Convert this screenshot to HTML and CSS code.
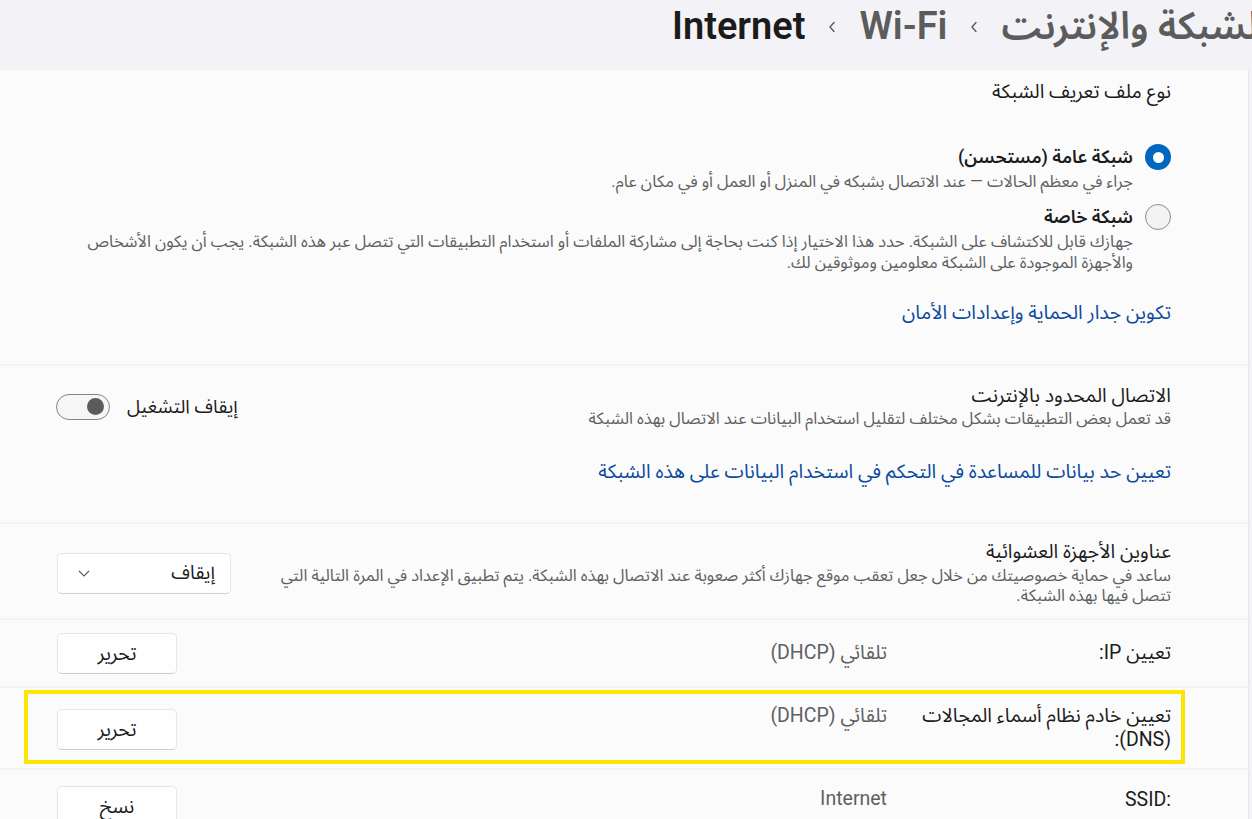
FILE: index.html
```html
<!DOCTYPE html>
<html lang="ar" dir="rtl">
<head>
<meta charset="utf-8">
<title>Wi-Fi - Internet</title>
<link rel="stylesheet" href="styles.css">
</head>
<body>
<header class="top">
  <nav class="crumbs">
    <span class="crumb crumb-muted">الشبكة والإنترنت</span>
    <svg class="chev" viewBox="0 0 8 12" aria-hidden="true"><polyline points="6,1.5 2,6 6,10.5"/></svg>
    <span class="crumb crumb-muted">Wi-Fi</span>
    <svg class="chev" viewBox="0 0 8 12" aria-hidden="true"><polyline points="6,1.5 2,6 6,10.5"/></svg>
    <span class="crumb crumb-current">Internet</span>
  </nav>
</header>

<main class="main">
  <section class="card profile">
    <div class="section-title">نوع ملف تعريف الشبكة</div>
    <div class="radio-list">
      <div class="radio-item">
        <span class="radio radio-on"></span>
        <div class="radio-text">
          <div class="radio-title">شبكة عامة (مستحسن)</div>
          <div class="desc">جراء في معظم الحالات — عند الاتصال بشبكه في المنزل أو العمل أو في مكان عام.</div>
        </div>
      </div>
      <div class="radio-item">
        <span class="radio"></span>
        <div class="radio-text">
          <div class="radio-title">شبكة خاصة</div>
          <div class="desc nowrap">جهازك قابل للاكتشاف على الشبكة. حدد هذا الاختيار إذا كنت بحاجة إلى مشاركة الملفات أو استخدام التطبيقات التي تتصل عبر هذه الشبكة. يجب أن يكون الأشخاص<br>والأجهزة الموجودة على الشبكة معلومين وموثوقين لك.</div>
        </div>
      </div>
    </div>
    <a class="link link-firewall" href="#">تكوين جدار الحماية وإعدادات الأمان</a>
  </section>

  <section class="card metered">
    <div class="setting-head">
      <div class="setting-text">
        <div class="setting-title">الاتصال المحدود بالإنترنت</div>
        <div class="desc">قد تعمل بعض التطبيقات بشكل مختلف لتقليل استخدام البيانات عند الاتصال بهذه الشبكة</div>
      </div>
      <div class="toggle-wrap">
        <span class="toggle-label">إيقاف التشغيل</span>
        <span class="toggle"><span class="knob"></span></span>
      </div>
    </div>
    <a class="link link-data" href="#">تعيين حد بيانات للمساعدة في التحكم في استخدام البيانات على هذه الشبكة</a>
  </section>

  <section class="card random">
    <div class="setting-head">
      <div class="setting-text">
        <div class="setting-title">عناوين الأجهزة العشوائية</div>
        <div class="desc desc-tight nowrap">ساعد في حماية خصوصيتك من خلال جعل تعقب موقع جهازك أكثر صعوبة عند الاتصال بهذه الشبكة. يتم تطبيق الإعداد في المرة التالية التي<br>تتصل فيها بهذه الشبكة.</div>
      </div>
      <div class="dropdown">
        <span class="dropdown-value">إيقاف</span>
        <svg class="dropdown-chev" viewBox="0 0 12 7" aria-hidden="true"><polyline points="1,1 6,6 11,1"/></svg>
      </div>
    </div>
  </section>

  <section class="card info-row info-row-ip">
    <div class="info-label">تعيين IP:</div>
    <div class="info-value">تلقائي (DHCP)</div>
    <button class="btn">تحرير</button>
  </section>

  <section class="card info-row info-row-dns">
    <div class="highlight">
      <div class="info-label">تعيين خادم نظام أسماء المجالات<br>(DNS):</div>
      <div class="info-value">تلقائي (DHCP)</div>
      <button class="btn">تحرير</button>
    </div>
  </section>

  <section class="card info-row info-row-ssid">
    <div class="info-label"><span dir="ltr">SSID:</span></div>
    <div class="info-value">Internet</div>
    <button class="btn">نسخ</button>
  </section>
</main>
</body>
</html>
```

FILE: styles.css
```css
* { box-sizing: border-box; }

html, body { margin: 0; padding: 0; }

body {
  width: 1252px;
  height: 819px;
  overflow: hidden;
  background: #f3f3f7;
  color: #1b1b1b;
  font-family: "Roboto", "Noto Sans Arabic", "Noto Sans", "DejaVu Sans", sans-serif;
  font-size: 19.5px;
}

/* ---------- header / breadcrumb ---------- */
.top {
  height: 70px;
  display: flex;
  justify-content: flex-end;
  align-items: flex-start;
  padding-left: 672px;
  overflow: hidden;
}

.crumbs {
  flex: none;
  display: flex;
  align-items: center;
  font-size: 38px;
  font-weight: 600;
  line-height: 52px;
  white-space: nowrap;
}

.crumb-muted { color: #5c5c5c; }
.crumb-current { color: #1b1b1b; }

.chev {
  width: 8px;
  height: 12px;
  margin: 2px 23px 0;
  fill: none;
  stroke: #5c5c5c;
  stroke-width: 1.4;
  stroke-linecap: round;
  stroke-linejoin: round;
}

/* ---------- cards ---------- */
.main {
  display: flex;
  flex-direction: column;
  gap: 2px;
  margin-right: 3px;
}

.card {
  flex: none;
  background: #fbfbfc;
  border-right: 1px solid #e6e6ea;
  padding: 0 77px 0 57px;
}

.section-title,
.setting-title,
.radio-title,
.toggle-label,
.info-label,
.info-value,
.link {
  font-size: 19.5px;
  line-height: 24px;
}

.desc {
  font-size: 16.5px;
  line-height: 21px;
  color: #606060;
}

.nowrap { white-space: nowrap; }

.link {
  display: block;
  color: #0b4a9c;
  text-decoration: none;
}

/* profile card */
.profile {
  height: 294px;
  padding-top: 10px;
}

.radio-list {
  margin-top: 41px;
  display: flex;
  flex-direction: column;
  gap: 13px;
}

.radio-item {
  display: flex;
  align-items: flex-start;
  gap: 12px;
}

.radio {
  flex: none;
  width: 26px;
  height: 26px;
  margin-top: -1px;
  border-radius: 50%;
  border: 1px solid #8b8b8b;
  background: #f3f3f3;
}

.radio-on {
  border: none;
  background: #0067c0;
  display: flex;
  align-items: center;
  justify-content: center;
}

.radio-on::after {
  content: "";
  width: 11px;
  height: 11px;
  border-radius: 50%;
  background: #ffffff;
}

.radio-title {
  font-size: 18px;
  font-weight: 600;
}

.radio-text .desc { margin-top: 2px; }

.link-firewall { margin-top: 28px; }

/* metered card */
.metered {
  height: 156px;
  padding-top: 18px;
}

.setting-head {
  display: flex;
  align-items: center;
  justify-content: space-between;
  gap: 34px;
}

.setting-text {
  flex: 1;
  min-width: 0;
}

.toggle-wrap {
  flex: none;
  display: flex;
  align-items: center;
  gap: 17px;
  margin-left: -1px;
}

.toggle-label { font-size: 18.8px; }

.toggle {
  width: 54px;
  height: 26px;
  border: 1px solid #858585;
  border-radius: 13px;
  background: #f6f6f6;
  display: flex;
  align-items: center;
  justify-content: flex-start;
  padding: 0 5px;
}

.knob {
  width: 17px;
  height: 17px;
  border-radius: 50%;
  background: #5b5b5b;
}

.link-data { margin-top: 31px; }

/* random hardware card */
.random {
  height: 94px;
  padding-top: 16px;
}

.desc-tight {
  line-height: 20px;
  margin-top: 2px;
}

.dropdown {
  flex: none;
  width: 174px;
  height: 41px;
  background: #ffffff;
  border: 1px solid #e5e5e5;
  border-bottom-color: #cfcfcf;
  border-radius: 5px;
  display: flex;
  align-items: center;
  justify-content: space-between;
  padding: 0 15px 0 20px;
}

.dropdown-value { font-size: 19px; }

.dropdown-chev {
  width: 12px;
  height: 7px;
  fill: none;
  stroke: #5c5c5c;
  stroke-width: 1.2;
}

/* info rows */
.info-row {
  display: flex;
  align-items: center;
}

.info-row-ip { height: 66px; }

.info-label {
  flex: none;
  width: 270px;
  margin-left: 14px;
  white-space: nowrap;
}

.info-value {
  flex: 1;
  color: #606060;
}

.btn {
  flex: none;
  width: 120px;
  height: 41px;
  background: #fefefe;
  border: 1px solid #e6e6e6;
  border-bottom-color: #cdcdcd;
  border-radius: 5px;
  font-family: inherit;
  font-size: 19.5px;
  line-height: 39px;
  color: #1b1b1b;
  padding: 0;
}

.info-row-dns {
  height: 80px;
  align-items: flex-start;
  padding: 2px 63px 0 24px;
}

.highlight {
  flex: 1;
  height: 74px;
  display: flex;
  align-items: flex-start;
  border: 4px solid #ffe600;
  padding: 10px 10px 0 29px;
}

.highlight .btn {
  margin-top: 5px;
}

.info-row-ssid {
  align-items: flex-start;
  padding-top: 16px;
  height: 60px;
}

.info-row-ssid .info-label { margin-top: 2px; }
.info-row-ssid .info-value { margin-top: 1px; }
```
